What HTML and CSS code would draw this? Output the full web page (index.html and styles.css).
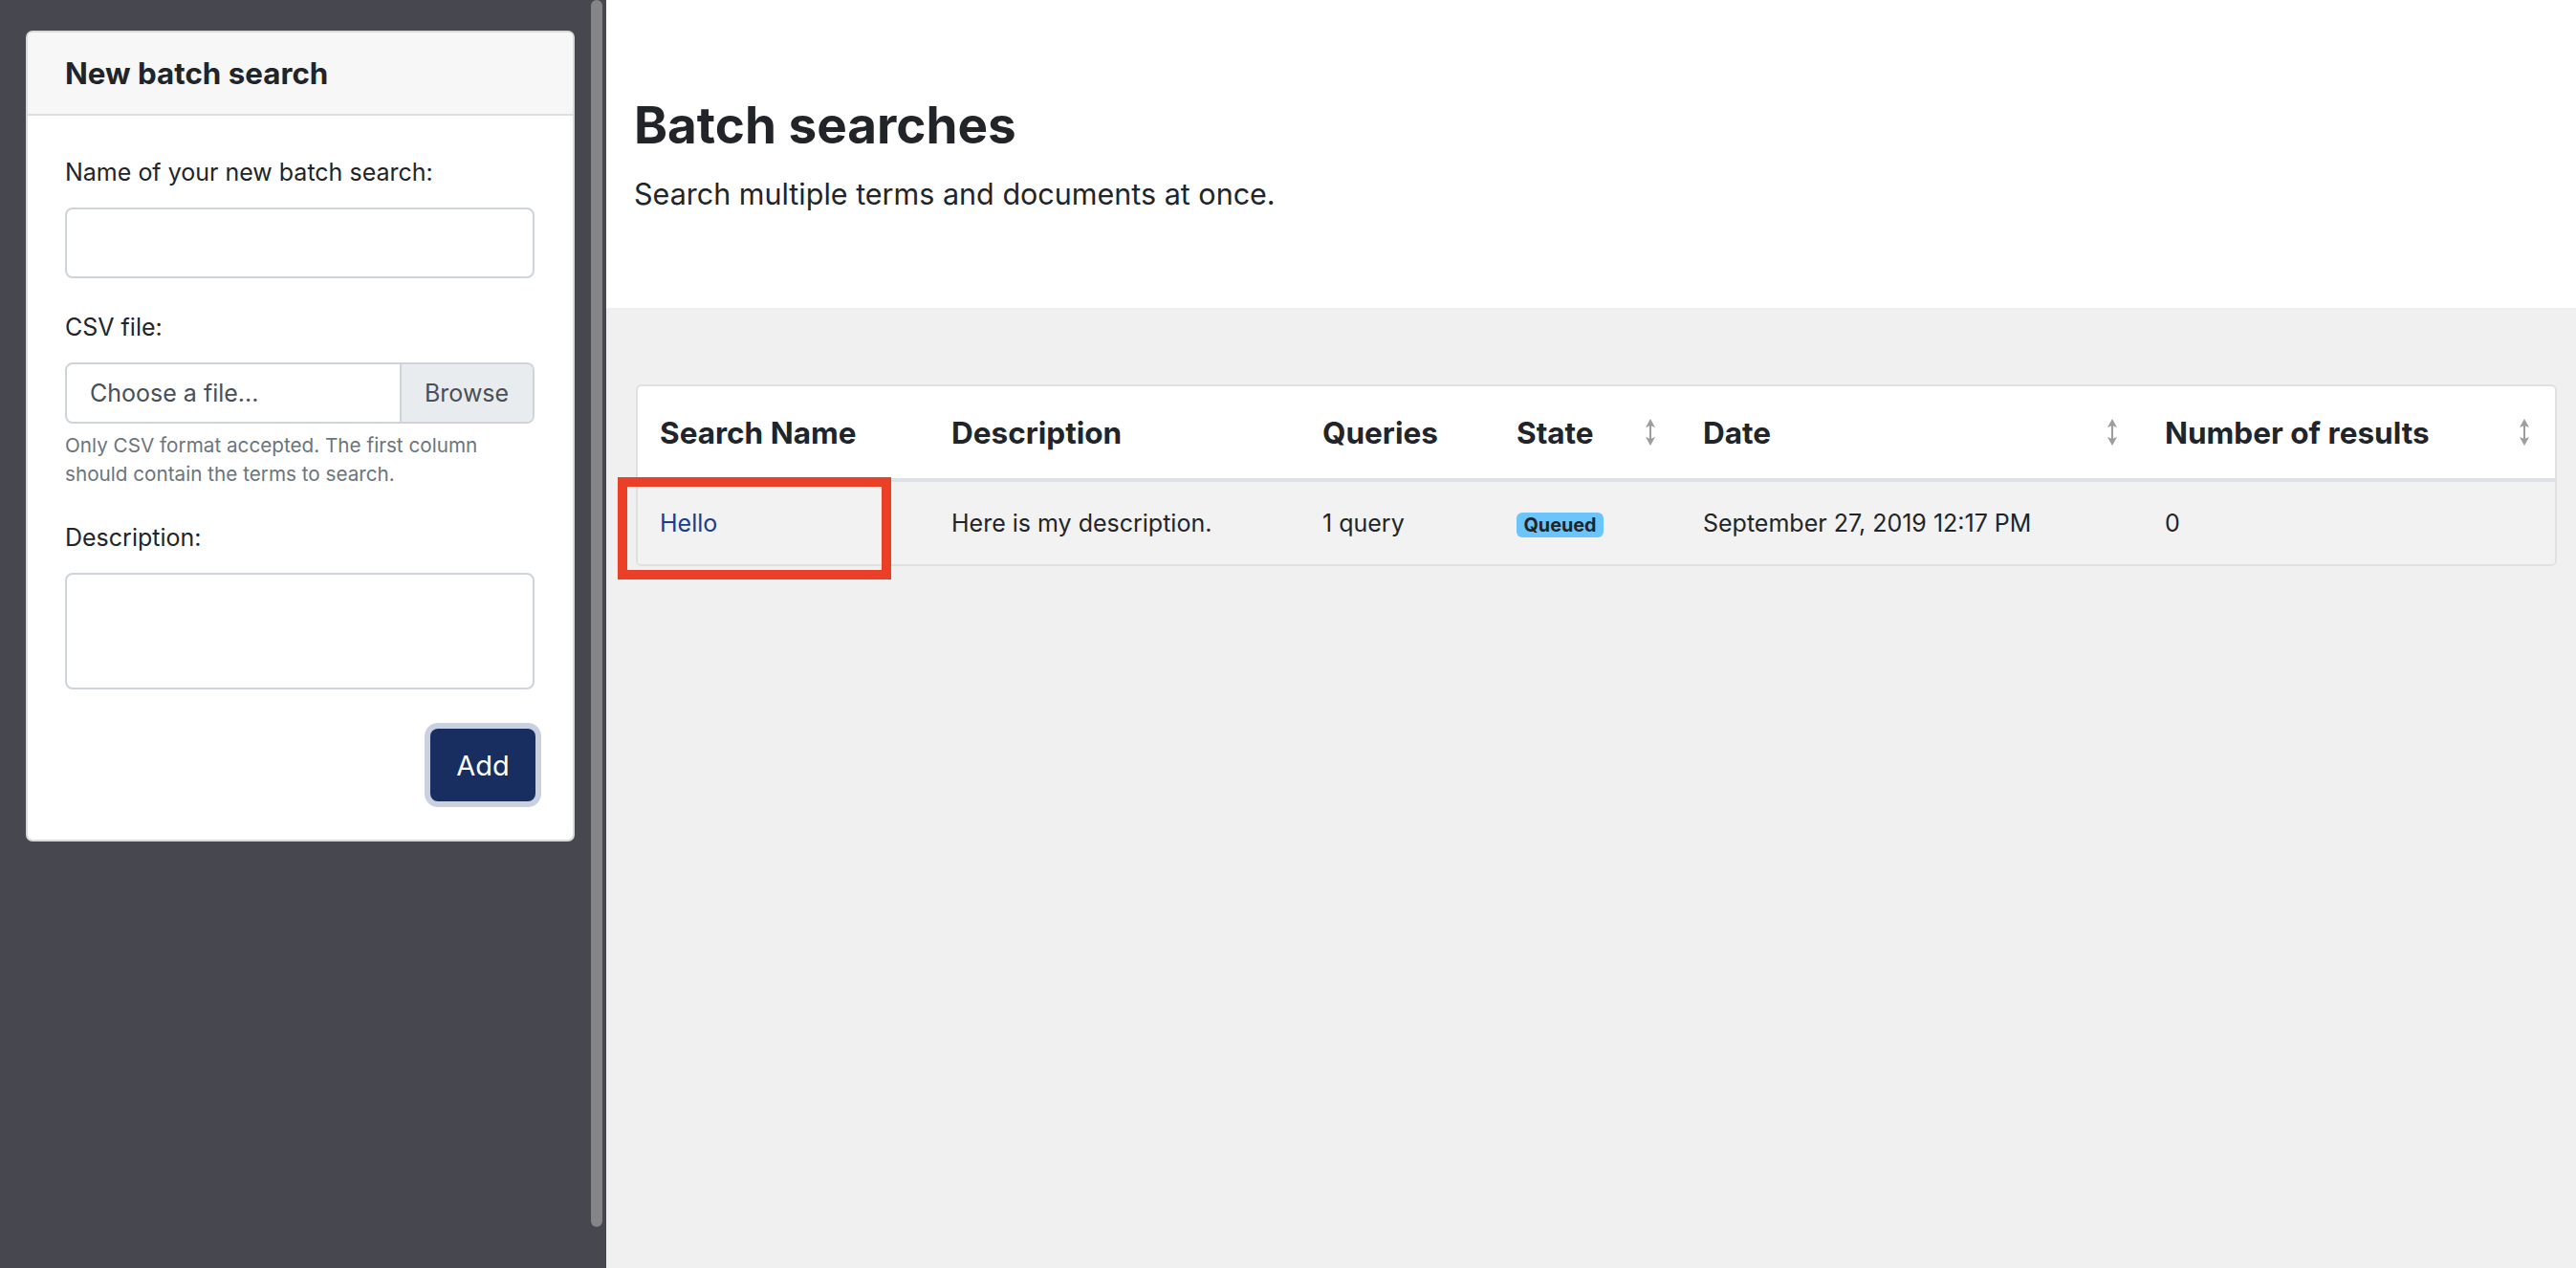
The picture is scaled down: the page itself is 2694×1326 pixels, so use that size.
FILE: index.html
```html
<!DOCTYPE html>
<html lang="en">
<head>
<meta charset="utf-8">
<title>Batch searches</title>
<link rel="stylesheet" href="styles.css">
</head>
<body>
<div class="app">
  <aside class="sidebar">
    <div class="panel">
      <div class="panel-header">New batch search</div>
      <form class="panel-body">
        <div class="field">
          <label class="label">Name of your new batch search:</label>
          <input class="input" type="text">
        </div>
        <div class="field">
          <label class="label">CSV file:</label>
          <div class="file">
            <span class="file-name">Choose a file...</span>
            <span class="file-browse">Browse</span>
          </div>
          <small class="help">Only CSV format accepted. The first column<br>should contain the terms to search.</small>
        </div>
        <div class="field field-last">
          <label class="label">Description:</label>
          <textarea class="textarea"></textarea>
        </div>
        <div class="actions"><button class="btn" type="button">Add</button></div>
      </form>
    </div>
    <div class="scrollbar"></div>
  </aside>
  <main class="main">
    <header class="page-header">
      <h1>Batch searches</h1>
      <p>Search multiple terms and documents at once.</p>
    </header>
    <section class="content">
      <div class="table-card">
        <table class="table">
          <colgroup>
            <col class="c1"><col class="c2"><col class="c3"><col class="c4"><col class="c5"><col class="c6">
          </colgroup>
          <thead>
            <tr>
              <th>Search Name</th>
              <th>Description</th>
              <th>Queries</th>
              <th class="sortable"><div class="th-inner"><span>State</span><svg class="sort" viewBox="0 0 12 30" width="12" height="30"><path d="M6 4V26" /><path class="head" d="M6 1L11 10L6 8L1 10Z"/><path class="head" d="M6 29L11 20L6 22L1 20Z"/></svg></div></th>
              <th class="sortable"><div class="th-inner"><span>Date</span><svg class="sort" viewBox="0 0 12 30" width="12" height="30"><path d="M6 4V26" /><path class="head" d="M6 1L11 10L6 8L1 10Z"/><path class="head" d="M6 29L11 20L6 22L1 20Z"/></svg></div></th>
              <th class="sortable"><div class="th-inner"><span>Number of results</span><svg class="sort" viewBox="0 0 12 30" width="12" height="30"><path d="M6 4V26" /><path class="head" d="M6 1L11 10L6 8L1 10Z"/><path class="head" d="M6 29L11 20L6 22L1 20Z"/></svg></div></th>
            </tr>
          </thead>
          <tbody>
            <tr>
              <td><a class="link" href="#">Hello</a></td>
              <td>Here is my description.</td>
              <td>1 query</td>
              <td><span class="badge">Queued</span></td>
              <td>September 27, 2019 12:17 PM</td>
              <td>0</td>
            </tr>
          </tbody>
        </table>
        <div class="highlight"></div>
      </div>
    </section>
  </main>
</div>
</body>
</html>
```
FILE: styles.css
```css
* { box-sizing: border-box; }
html, body { margin: 0; padding: 0; }
body {
  font-family: Inter, "Noto Sans", "Liberation Sans", sans-serif;
  color: #212529;
  background: #f1f0f1;
}
.app { display: flex; height: 1326px; overflow: hidden; }

/* Sidebar */
.sidebar {
  flex: none;
  width: 634px;
  background: #474750;
  display: flex;
  align-items: flex-start;
  padding-left: 27px;
}
.panel {
  width: 574px;
  margin-top: 32px;
  background: #fff;
  border: 2px solid #d9d9d9;
  border-radius: 7px;
  overflow: hidden;
}
.panel-header {
  height: 87px;
  display: flex;
  align-items: center;
  padding-left: 39px;
  background: #f7f7f7;
  border-bottom: 2px solid #dfdfdf;
  font-size: 31.3px;
  font-weight: 700;
}
.panel-body { padding: 40px 40px 40px 39px; }
.field { margin-bottom: 32px; }
.field-last { margin-bottom: 0; }
.label {
  display: block;
  font-size: 25px;
  line-height: 39px;
  margin-bottom: 17px;
}
.input, .textarea {
  display: block;
  width: 100%;
  height: 74px;
  border: 2px solid #ced4da;
  border-radius: 8px;
  background: #fff;
  font: inherit;
  margin: 0;
}
.textarea { height: 122px; resize: none; }
.file {
  display: flex;
  height: 64px;
  border: 2px solid #ced4da;
  border-radius: 8px;
  overflow: hidden;
  font-size: 25px;
  color: #495057;
}
.file-name { flex: 1; display: flex; align-items: center; padding-left: 24px; }
.file-browse {
  width: 139px;
  display: flex;
  align-items: center;
  padding-left: 24px;
  background: #e9ecef;
  border-left: 2px solid #ced4da;
}
.help {
  display: block;
  margin-top: 8px;
  font-size: 20.7px;
  line-height: 30px;
  color: #6c757d;
}
.actions { display: flex; justify-content: flex-end; margin-top: 41px; margin-right: -1px; }
.btn {
  width: 110px;
  height: 76px;
  border: none;
  border-radius: 8px;
  background: #182e60;
  color: #fff;
  font-family: inherit;
  font-size: 29px;
  box-shadow: 0 0 0 6px #c9d0e0;
  padding: 0;
}
.scrollbar {
  flex: none;
  width: 12px;
  height: 1283px;
  margin-left: 17px;
  border-radius: 6px;
  background: #858588;
}

/* Main */
.main { flex: 1; display: flex; flex-direction: column; background: #f1f0f1; }
.page-header {
  height: 322px;
  background: #fff;
  padding: 100px 0 0 29px;
}
.page-header h1 {
  margin: 0 0 20px;
  font-size: 53px;
  line-height: 62px;
  font-weight: 700;
}
.page-header p {
  margin: 0;
  font-size: 30.5px;
  line-height: 41px;
}
.content { padding: 80px 20px 0 31px; }
.table-card {
  position: relative;
  background: #fff;
  border: 2px solid #e0e0e0;
  border-radius: 6px;
}
.table {
  width: 100%;
  table-layout: fixed;
  border-collapse: separate;
  border-spacing: 0;
}
.c1 { width: 305px; } .c2 { width: 388px; } .c3 { width: 203px; }
.c4 { width: 195px; } .c5 { width: 483px; } .c6 { width: 431px; }
.table th {
  height: 100px;
  padding: 0 0 0 23px;
  text-align: left;
  font-size: 31.5px;
  font-weight: 700;
  border-bottom: 4px solid #dee2e6;
  vertical-align: middle;
}
.th-inner { display: flex; align-items: center; justify-content: space-between; padding-right: 26px; }
.sort { display: block; }
.sort path { stroke: #9d9d9d; stroke-width: 2; fill: none; }
.sort path.head { fill: #9d9d9d; stroke: none; }
.table td {
  height: 86px;
  padding: 0 0 0 23px;
  font-size: 25px;
  background: #f2f2f2;
  vertical-align: middle;
}
.table td:first-child { border-bottom-left-radius: 4px; }
.table td:last-child { border-bottom-right-radius: 4px; }
.link { color: #1c3d8c; text-decoration: none; }
.badge {
  display: inline-block;
  padding: 0 7.5px;
  height: 26px;
  line-height: 26px;
  border-radius: 6px;
  background: #6bc4fa;
  font-size: 19.8px;
  font-weight: 700;
  vertical-align: middle;
}
.highlight {
  position: absolute;
  left: -21px;
  top: 95px;
  width: 286px;
  height: 107px;
  border: 10px solid #ea4028;
}
```
